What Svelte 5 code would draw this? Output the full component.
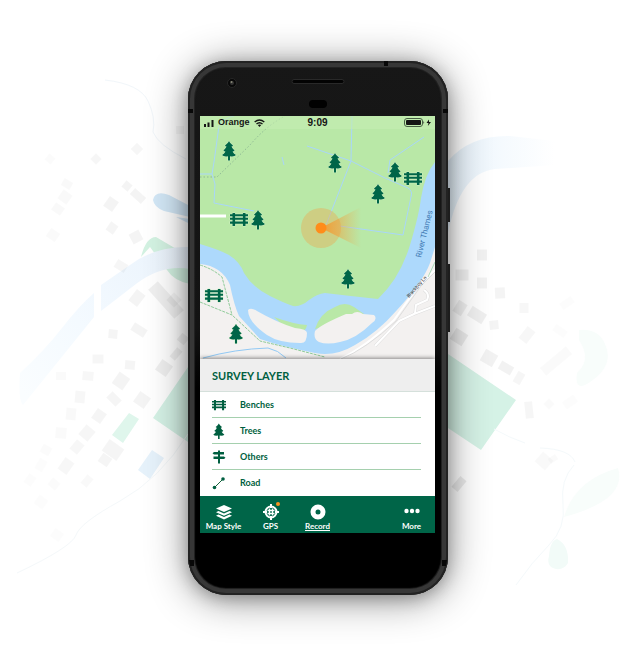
<script>
  const layers = [
    { name: 'Benches', icon: 'bench' },
    { name: 'Trees', icon: 'tree' },
    { name: 'Others', icon: 'sign' },
    { name: 'Road', icon: 'road' }
  ];

  const trees = [[222, 141], [251, 210], [328, 153], [388, 162], [371, 184], [341, 269], [229, 324]];
  const benches = [[230, 213], [404, 172], [205, 289]];

  // x centre, y centre, width, height, angle, opacity
  const houses = [
    [50, 159, 8, 8, 40, 0.015], [96, 159, 8, 8, 45, 0.035], [137, 149, 9, 9, 45, 0.035], [180, 130, 8, 8, 0, 0.03],
    [67, 184, 10, 8, 30, 0.025], [65, 197, 11, 11, 35, 0.025], [58, 209, 11, 9, 35, 0.025], [53, 235, 11, 10, 35, 0.02],
    [127, 186, 8, 8, 40, 0.045], [138, 196, 15, 8, 42, 0.045], [111, 204, 11, 12, 35, 0.045], [112, 228, 9, 10, 35, 0.04],
    [136, 237, 11, 11, -28, 0.045], [121, 266, 12, 9, 32, 0.035], [137, 298, 11, 14, 38, 0.045],
    [166, 300, 39, 13, 48, 0.06], [174, 300, 11, 11, 45, 0.04], [139, 330, 15, 9, 32, 0.045], [113, 334, 9, 9, 5, 0.04],
    [98, 359, 11, 9, 0, 0.035], [130, 365, 10, 9, 5, 0.04], [164, 368, 13, 13, 35, 0.06], [176, 354, 12, 7, -50, 0.06],
    [183, 339, 9, 9, 40, 0.06], [61, 376, 10, 8, 0, 0.02], [88, 376, 11, 9, 5, 0.03], [121, 381, 13, 14, 35, 0.045],
    [80, 397, 10, 12, 5, 0.03], [114, 399, 13, 9, 45, 0.04], [142, 400, 13, 13, 35, 0.045], [71, 414, 10, 12, 5, 0.025],
    [99, 416, 11, 12, 35, 0.04], [61, 433, 11, 11, 5, 0.02], [87, 433, 12, 13, 40, 0.035], [77, 447, 10, 12, 40, 0.03],
    [46, 450, 10, 9, 30, 0.015], [113, 450, 18, 14, 35, 0.04], [105, 460, 11, 10, 35, 0.04], [66, 466, 11, 14, 35, 0.03],
    [41, 465, 9, 12, 30, 0.012], [87, 481, 8, 11, 40, 0.025], [54, 484, 10, 9, 40, 0.015], [30, 480, 9, 11, 35, 0.01],
    [41, 502, 11, 11, 35, 0.012], [57, 535, 11, 10, 35, 0.012],
    [482, 255, 10, 11, 0, 0.05], [462, 275, 13, 11, 0, 0.06], [482, 283, 10, 11, 0, 0.05], [500, 293, 10, 11, -3, 0.045],
    [460, 308, 10, 13, 32, 0.06], [477, 315, 17, 11, 32, 0.06], [524, 308, 9, 10, 0, 0.03], [494, 325, 9, 9, -5, 0.045],
    [567, 303, 14, 8, -35, 0.012], [459, 337, 14, 13, 32, 0.07], [489, 358, 14, 13, 30, 0.05], [506, 368, 14, 9, 30, 0.05],
    [519, 378, 8, 12, 30, 0.035], [527, 335, 10, 15, 38, 0.03], [560, 331, 14, 8, 35, 0.012], [556, 361, 34, 10, -40, 0.018],
    [529, 410, 8, 17, -6, 0.035], [549, 404, 8, 8, 45, 0.02], [570, 402, 14, 9, -35, 0.012], [544, 461, 14, 13, 42, 0.025],
    [553, 459, 9, 6, -35, 0.018], [459, 484, 8, 14, 40, 0.08]
  ];
</script>

{#snippet tree()}
  <path d="M7 0C8 2 9.5 3.400 11 4.500Q10.500 5.700 9.400 5.500Q10.500 7.800 12.600 9.300Q12 10.700 10.500 10.400Q11.600 12.500 14 14Q12.500 16 8 15.300V19.500H6V15.300Q1.500 16 0 14Q2.400 12.500 3.500 10.400Q2 10.700 1.400 9.300Q3.500 7.800 4.600 5.500Q3.500 5.700 3 4.500C4.500 3.400 6 2 7 0Z" />
{/snippet}

{#snippet bench()}
  <path d="M2.500 0h2.600v1.300h7.800V0h2.600v1.300H18v2H15.500v1.500H18v2H15.500v1.600H18v2.300H15.500V13H12.900v-2.300H5.100V13H2.500v-2.300H0V8.400H2.500V6.800H0v-2H2.500V3.300H0v-2H2.500ZM5.100 3.300v1.500h7.800V3.300ZM5.100 6.800v1.600h7.800V6.800Z" />
{/snippet}

<main>
  <svg class="backdrop" viewBox="0 0 644 655" preserveAspectRatio="xMidYMin meet" aria-hidden="true">
    <defs>
      <linearGradient id="riverWest" gradientUnits="userSpaceOnUse" x1="20" y1="390" x2="190" y2="250">
        <stop offset="0" stop-color="#fafdff" />
        <stop offset=".4" stop-color="#f4faff" />
        <stop offset="1" stop-color="#eaf3fc" />
      </linearGradient>
      <linearGradient id="riverEast">
        <stop offset="0" stop-color="#e6f2fb" />
        <stop offset=".5" stop-color="#f5fafe" />
        <stop offset="1" stop-color="#fff" />
      </linearGradient>
    </defs>
    <path d="M105 80Q140 84 148 101T153 132Q158 145 186 159" fill="none" stroke="#f1f6fa" />
    <path d="M141 257Q146 237 156 237L190 257V284Q174 281 167 270L150 247Z" fill="#d3f2e2" />
    <path d="M190 247V269Q162 264 136 284L101 311V285L130 265Q155 246 190 247ZM94 293V317L23 405Q18 400 20 373Q45 350 62 328T94 293Z" fill="url(#riverWest)" />
    <path d="M190 206L169 195Q155 190 153 200Q154 207 164 211L190 217ZM176 217l14 7v-5Z" fill="#d3e8f7" />
    <path d="M448 161Q470 135 510 136L555 141V165L495 169Q460 173 448 233Z" fill="url(#riverEast)" />
    <path d="M188 367L153 418L188 442ZM448 354L516 400L481 450L448 428Z" fill="#d5f2e6" />
    <path d="M129 413l10 6l-16 24l-11-8Z" fill="#dff6ec" />
    <path d="M152 450l12 8l-14 21l-12-9Z" fill="#e6f2fb" />
    <path d="M188 434Q160 479 120 501T76 535T17 573" fill="none" stroke="#f4f8fa" />
    <path d="M494 429Q510 438 525 443M540 448Q570 449 575 462M574 465Q560 480 563 504T549 545T516 585" fill="none" stroke="#f4f9fb" />
    <path d="M579 330Q598 328 605 344Q615 365 590 382Q574 393 577 373Q592 360 579 340ZM564 517Q575 480 618 468Q628 500 564 517Z" fill="#f8fdfb" />
    <path d="M549 556Q550 541 557 539Q569 545 568 563Q564 570 556 569Q546 567 549 556Z" fill="#f2fbf8" />
    {#each houses as [x, y, w, h, angle, opacity]}
      <rect x={x - w / 2} y={y - h / 2} width={w} height={h} transform="rotate({angle} {x} {y})" fill-opacity={opacity} />
    {/each}
  </svg>

  <article class="phone">
    <svg class="hardware" viewBox="0 0 264 534" aria-hidden="true">
      <path d="M196 0h4v5h-4ZM0 48h5v4H0ZM255 48h5v4h-5ZM1 499h5v6H2ZM254 499h5l-1 6h-4Z" fill="#080808" />
      <path d="M260 127h2v34h-2ZM260 203h2v68h-2Z" fill="#1d1d1d" />
      <rect x="104" y="18.500" width="52" height="4" rx="2" fill="#030303" stroke="#292929" />
      <rect x="121" y="39" width="18" height="8" rx="4" fill="#010101" />
      <circle cx="44" cy="22" r="4.500" fill="#080808" stroke="#272727" />
      <circle cx="44" cy="22" r="2" fill="#333" />
      <circle cx="43.500" cy="21" r="1" fill="#887" />
    </svg>

    <div class="screen">
      <div class="map">
        <svg viewBox="200 116 235 243" role="img" aria-label="Survey map">
          <defs>
            <linearGradient id="cone">
              <stop offset="0" stop-color="#fa901f" stop-opacity=".8" />
              <stop offset="1" stop-color="#fa9a35" stop-opacity="0" />
            </linearGradient>
          </defs>
          <rect x="200" y="116" width="235" height="243" fill="#b9e8a7" />
          <path d="M200 244Q220 250 229 255Q240 262 244 273Q253 288 270 296Q284 303 293 306Q301 307 309 300Q317 294 325 293Q350 296 378 299Q400 278 410 245Q419 215 421 198Q425 174 435 162V359H200Z" fill="#add9fc" />
          <path d="M200 264Q222 266 230 285Q234 305 239 316L260 339Q280 346 315 353Q335 357 355 345Q377 333 397 310Q423 282 430 263L435 247V359H200Z" fill="#f3f1f0" />
          <path d="M274 317Q293 324 307 325Q306 331 300 332L285 327ZM315 329Q320 313 335 307Q345 301 354 307L364 314L340 322Z" fill="#b9e8a7" />
          <path d="M248 310Q251 307 257 311Q276 322 295 328Q307 329 307 333Q307 344 300 343Q279 343 267 335Q248 322 248 310ZM315 331Q320 325 346 314H352Q357 310 363 314L374 315Q378 319 372 323Q356 339 340 342Q327 345 319 342Q313 339 315 331Z" fill="#f3f1f0" />
          <path d="M234 116Q224 118 219 126L214 162L212 174L200 174M212 174L215 184L214 203L254 211M282 157L284 165M352 116L351 161M307 146L351 161L385 178L408 188Q413 191 411 197L403 235L340 226M351 161L326 225M424 137L390 160L388 173" fill="none" stroke="#a9d6fa" />
          <path d="M200 177H217L250 145Q266 126 285 116" fill="none" stroke="#8fba95" stroke-dasharray="1.500 2" />
          <path d="M200 216H226" stroke="#fff" stroke-width="3" />
          <path d="M200 265Q213 269 222 277L232 315M200 302L232 315L260 341L290 348L325 357" fill="none" stroke="#8fcb99" stroke-dasharray="3 1" />
          <path d="M203 358Q235 349 268 348Q278 350 286 358" fill="none" stroke="#92c9f4" />
          <g fill="none" stroke-linejoin="round">
            <path d="M340 359Q364 348 394 320L419 285L435 270" stroke="#fff" stroke-width="2" />
            <path d="M341 359Q366 349 396 321L421 286L435 272" stroke="#ddd" />
            <path d="M375 346L399 321L414 314L435 306M415 313L416 305L427 300Q430 294 424 290" stroke="#dcdcdc" stroke-width="3" />
            <path d="M375 346L399 321L414 314L435 306M415 313L416 305L427 300Q430 294 424 290" stroke="#fff" stroke-width="2" />
            <path d="M428 277L435 262" stroke="#a9d9ba" />
          </g>
          <text class="river" transform="translate(421 258) rotate(-76)">River Thames</text>
          <text class="lane" transform="translate(409 298) rotate(-48)">Blackboy Ln</text>
          <g class="markers">
            {#each trees as [x, y]}
              <g transform="translate({x} {y})">{@render tree()}</g>
            {/each}
            {#each benches as [x, y]}
              <g transform="translate({x} {y})">{@render bench()}</g>
            {/each}
          </g>
          <circle cx="321" cy="228" r="20" fill="#ecaa50" fill-opacity=".42" />
          <path d="M321 228L361 207V248Z" fill="url(#cone)" />
          <circle cx="321" cy="228" r="5.500" fill="#ff8c1a" />
        </svg>

        <header class="status">
          <div class="carrier">
            <svg width="10" height="8" viewBox="0 0 10 8" aria-hidden="true"><path d="M0 5h2v3H0ZM3.500 3.500h2V8h-2ZM7.500 1h2v7h-2Z" /></svg>
            <span>Orange</span>
            <svg width="11" height="8" viewBox="0 0 11 8" aria-hidden="true">
              <path d="M.7 3Q5.500-1 10.300 3M2.500 5Q5.500 2.400 8.500 5" fill="none" stroke="#151515" stroke-width="1.400" />
              <path d="M3.800 6Q5.500 4.800 7.200 6L5.500 8Z" />
            </svg>
          </div>
          <time>9:09</time>
          <svg class="battery" width="27" height="9" viewBox="0 0 27 9" role="img" aria-label="Battery charging">
            <rect x=".5" y=".5" width="18" height="8" rx="2.500" fill="none" stroke="#476044" />
            <rect x="2" y="2" width="15" height="5" rx="1" />
            <path d="M19.500 3q1.500 1.500 0 3ZM25 1.500L22.500 5H24.500L23.800 8L27 4H25Z" />
          </svg>
        </header>
      </div>

      <section class="panel">
        <h1>SURVEY LAYER</h1>
        <ul>
          {#each layers as layer}
            <li>
              <button type="button">
                <svg width="14" height="16" viewBox="0 0 14 16" aria-hidden="true">
                  {#if layer.icon === 'bench'}
                    <g transform="translate(0 3) scale(.78)">{@render bench()}</g>
                  {:else if layer.icon === 'tree'}
                    <g transform="translate(1.300 .5) scale(.79)">{@render tree()}</g>
                  {:else if layer.icon === 'sign'}
                    <path d="M6 1.500h2V3h4v2.500H8V7.500h4l1.500 1.300L12 10H8v4.500H6V10H1.500V7.500H6V5.500H2L.5 4.300L2 3h4Z" />
                  {:else}
                    <path d="M3 12L11 4" stroke="#15623b" />
                    <circle cx="2.500" cy="12.500" r="1.800" /><circle cx="11" cy="4" r="1.800" />
                  {/if}
                </svg>
                {layer.name}
              </button>
            </li>
          {/each}
        </ul>
      </section>

      <nav>
        <button type="button">
          <svg width="16" height="16" viewBox="0 0 16 16" aria-hidden="true">
            <path d="M8 1L16 4.500L8 8L0 4.500ZM2.500 7L8 9.400L13.500 7L16 8.200L8 11.800L0 8.200ZM2.500 10.500L8 13L13.500 10.500L16 11.800L8 15.500L0 11.800Z" />
          </svg>
          <span>Map Style</span>
        </button>
        <button type="button">
          <svg width="16" height="16" viewBox="0 0 16 16" aria-hidden="true">
            <circle cx="8" cy="8" r="5.500" fill="none" stroke="#fff" stroke-width="2" />
            <path d="M7 0h2v4H7ZM7 12h2v4H7ZM0 7h4v2H0ZM12 7h4v2h-4Z" />
            <path d="M6.500 4.500v7M9.500 4.500v7M4.500 6.500h7M4.500 9.500h7" stroke="#fff" stroke-width="1.300" />
          </svg>
          <i class="dot"></i>
          <span>GPS</span>
        </button>
        <button type="button" class="active">
          <svg width="16" height="16" viewBox="0 0 16 16" aria-hidden="true">
            <path fill-rule="evenodd" d="M8 .5a7.500 7.500 0 1 0 0 15a7.500 7.500 0 1 0 0-15ZM8 5.500a2.500 2.500 0 1 1 0 5a2.500 2.500 0 1 1 0-5Z" />
          </svg>
          <span>Record</span>
        </button>
        <button type="button" class="more">
          <svg width="16" height="16" viewBox="0 0 16 16" aria-hidden="true">
            <circle cx="2.500" cy="7" r="2.200" /><circle cx="8" cy="7" r="2.200" /><circle cx="13.500" cy="7" r="2.200" />
          </svg>
          <span>More</span>
        </button>
      </nav>
    </div>
  </article>
</main>

<style>
  :global(body) {
    margin: 0;
    background: #fff;
  }
  main {
    position: relative;
    display: flex;
    justify-content: center;
    box-sizing: border-box;
    min-height: 100vh;
    padding: 61px 8px 60px 0;
    overflow: hidden;
    font-family: Lato, sans-serif;
  }
  svg {
    display: block;
    flex: none;
  }
  .backdrop {
    position: absolute;
    inset: 0;
    width: 100%;
    height: 100%;
  }
  .phone {
    position: relative;
    align-self: flex-start;
    box-sizing: border-box;
    width: 260px;
    padding: 55px 13px 62px 12px;
    border-radius: 38px;
    background: linear-gradient(#171717, #131313 50%, #000 62%);
    box-shadow:
      inset 0 0 0 2px #222,
      inset 0 0 0 6px #373737,
      inset 0 0 1px 7px #242424,
      0 3px 16px rgba(0, 0, 0, 0.25),
      0 4px 40px rgba(0, 0, 0, 0.45);
  }
  .hardware {
    position: absolute;
    top: 0;
    left: 0;
    width: 264px;
    height: 534px;
  }
  .screen {
    position: relative;
    background: #fff;
  }
  .map {
    position: relative;
  }
  .map > svg {
    width: 100%;
  }
  .river {
    font: 8px Roboto, sans-serif;
    fill: #4279b4;
  }
  .lane {
    font: 5px Roboto, sans-serif;
    fill: #333;
  }
  .markers {
    fill: #006548;
    stroke: #d4f2c8;
    stroke-width: 1px;
    paint-order: stroke;
  }
  .status {
    position: absolute;
    inset: 0 0 auto;
    display: grid;
    grid-template-columns: 1fr auto 1fr;
    align-items: center;
    height: 13px;
    padding: 0 4px;
    background: rgba(196, 237, 178, 0.6);
    color: #151515;
    fill: #151515;
    font: bold 9px/13px "Liberation Sans", sans-serif;
  }
  .carrier {
    display: flex;
    align-items: center;
    gap: 4px;
  }
  time {
    font-size: 10px;
  }
  .battery {
    justify-self: end;
  }
  .panel {
    position: relative;
    color: #005f40;
    fill: #005f40;
    box-shadow: 0 -1px 4px rgba(0, 0, 0, 0.45);
    background: #fff;
  }
  h1 {
    box-sizing: border-box;
    height: 33px;
    margin: 0;
    padding: 1px 12px 0;
    border-bottom: 1px solid #d5e0db;
    background: #eee;
    font-size: 11px;
    font-weight: 700;
    line-height: 32px;
  }
  ul {
    margin: 0;
    padding: 0 14px 0 12px;
    list-style: none;
  }
  li {
    box-sizing: border-box;
    height: 26px;
    border-bottom: 1px solid #a5d0ae;
  }
  li:last-child {
    border-bottom-color: transparent;
  }
  button {
    margin: 0;
    padding: 0;
    border: 0;
    background: none;
    color: inherit;
    font: 700 9px/12px Lato, sans-serif;
    cursor: pointer;
  }
  li button {
    display: flex;
    align-items: center;
    gap: 14px;
    width: 100%;
    height: 25px;
  }
  nav {
    position: relative;
    display: grid;
    grid-template-columns: repeat(5, 1fr);
    height: 37px;
    background: #006548;
    color: #fff;
    fill: #fff;
  }
  nav button {
    position: relative;
    display: flex;
    flex-direction: column;
    align-items: center;
    gap: 1px;
    padding-top: 8px;
    font-size: 8px;
    font-weight: 700;
    line-height: 10px;
    white-space: nowrap;
  }
  .active span {
    height: 9px;
    border-bottom: 1px solid #fff;
  }
  .more {
    grid-column: 5;
  }
  .dot {
    position: absolute;
    top: 6px;
    right: 14px;
    width: 4px;
    height: 4px;
    border-radius: 50%;
    background: #f79321;
  }
</style>
